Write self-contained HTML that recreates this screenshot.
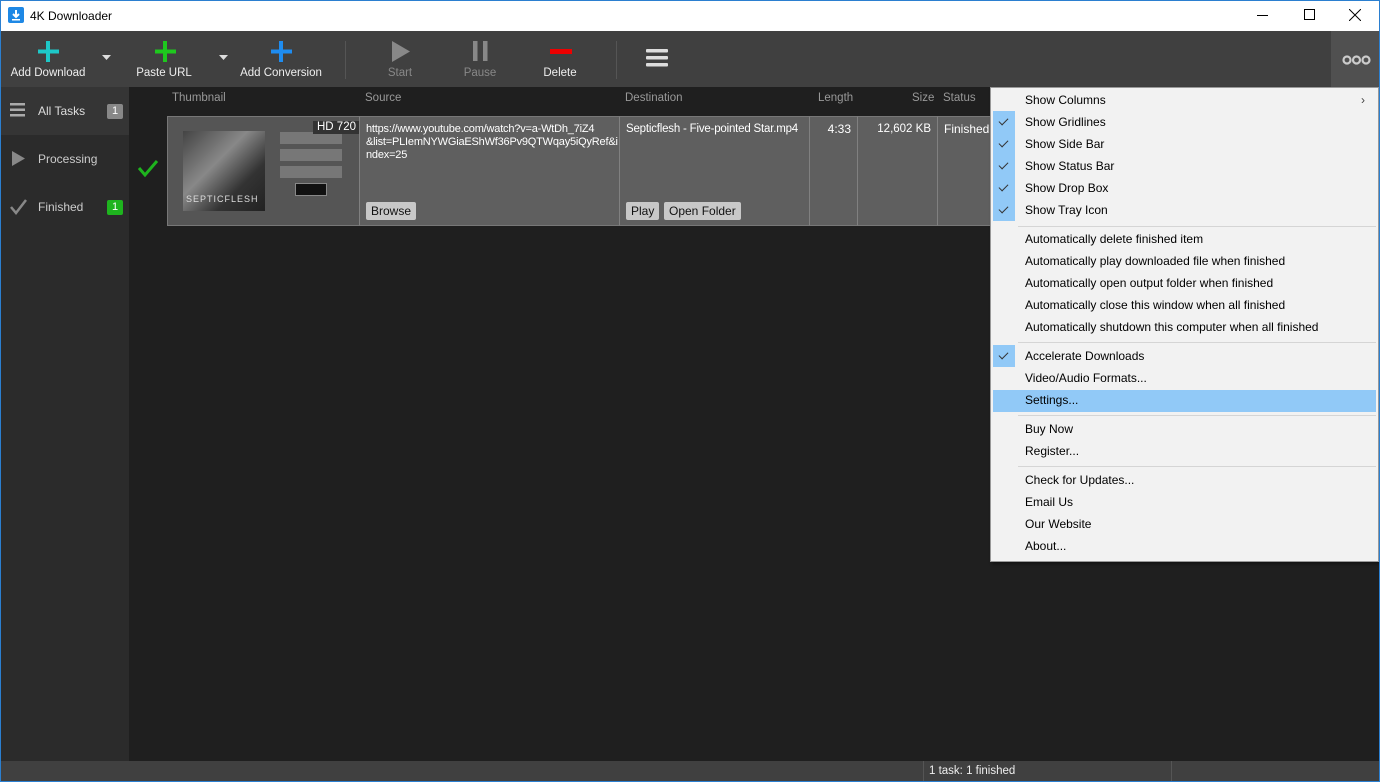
<!DOCTYPE html>
<html><head><style>
*{margin:0;padding:0;box-sizing:border-box}
body{width:1380px;height:782px;overflow:hidden;font-family:"Liberation Sans",sans-serif;font-size:12px;background:#1f1f1f;position:relative}
.a{position:absolute;white-space:nowrap}
#win{position:absolute;left:0;top:0;width:1380px;height:782px;border:1px solid #2b7fd0;pointer-events:none;z-index:10}
.tb{color:#eee;font-size:11.5px;text-align:center}
.mi{position:absolute;left:1025px;color:#000;font-size:12px;line-height:22px;height:22px;white-space:nowrap}
.ck{position:absolute;left:993px;width:22px;height:22px;background:#91c9f7}
.ck:after{content:"";position:absolute;left:8px;top:5px;width:4px;height:8px;border:solid #333;border-width:0 1.5px 1.5px 0;transform:rotate(45deg)}
.sep{position:absolute;left:1018px;width:358px;height:1px;background:#d5d5d5}
.btn{position:absolute;background:#c8c8c8;color:#111;font-size:12px;line-height:18px;padding:0 5px;border-radius:2px;white-space:nowrap}
.hd{position:absolute;top:92px;color:#999;font-size:11.5px}
.cell{position:absolute;top:116px;height:110px;background:#5f5f5f;border-right:1px solid #808080;border-top:1px solid #777;border-bottom:1px solid #777;color:#fff;font-size:12px;padding:6px 6px;line-height:13px;white-space:nowrap;overflow:hidden}
</style></head><body>
<div id="win"></div>
<div class="a" style="left:0;top:0;width:1380px;height:31px;background:#fff"></div>
<div class="a" style="left:8px;top:7px;width:16px;height:16px;background:#1e88e5;border-radius:2px"></div>
<svg class="a" style="left:8px;top:7px" width="16" height="16"><path d="M8 3v7M5 7l3 3 3-3" stroke="#fff" stroke-width="2" fill="none"/><rect x="4" y="12" width="8" height="1.5" fill="#fff"/></svg>
<div class="a" style="left:30px;top:9px;font-size:12px;color:#000">4K Downloader</div>
<div class="a" style="left:1257px;top:15px;width:11px;height:1px;background:#000"></div>
<div class="a" style="left:1304px;top:9px;width:11px;height:11px;border:1px solid #000"></div>
<svg class="a" style="left:1349px;top:9px" width="12" height="12"><path d="M0 0L12 12M12 0L0 12" stroke="#000"/></svg>
<div class="a" style="left:0;top:31px;width:1380px;height:56px;background:#404040"></div>
<div class="a" style="left:1331px;top:31px;width:49px;height:56px;background:#505050"></div>
<svg class="a" style="left:1342px;top:54px" width="30" height="12"><g fill="none" stroke="#ccc" stroke-width="2.2"><circle cx="5" cy="6" r="3.5"/><circle cx="14.5" cy="6" r="3.5"/><circle cx="24" cy="6" r="3.5"/></g></svg>
<svg class="a" style="left:0;top:31px" width="700" height="56">
<path d="M48 10v21M38 20.5h21" stroke="#1ec8c8" stroke-width="4"/>
<path d="M165 10v21M155 20.5h21" stroke="#1ec81e" stroke-width="4"/>
<path d="M281 10v21M271 20.5h21" stroke="#1e8cf0" stroke-width="4"/>
<path d="M102 24h9l-4.5 5z M219 24h9l-4.5 5z" fill="#ddd"/>
<path d="M392 10v21l18-10.5z" fill="#888"/>
<rect x="473" y="10" width="4.5" height="20" fill="#888"/><rect x="483" y="10" width="4.5" height="20" fill="#888"/>
<rect x="550" y="18" width="22" height="5" fill="#e00"/>
<rect x="345" y="10" width="1" height="38" fill="#555"/><rect x="616" y="10" width="1" height="38" fill="#555"/>
<g fill="#ddd"><rect x="646" y="18" width="22" height="3.5" rx="1"/><rect x="646" y="25" width="22" height="3.5" rx="1"/><rect x="646" y="32" width="22" height="3.5" rx="1"/></g>
</svg>
<div class="a tb" style="left:0;top:67px;width:96px">Add Download</div>
<div class="a tb" style="left:124px;top:67px;width:80px">Paste URL</div>
<div class="a tb" style="left:236px;top:67px;width:90px">Add Conversion</div>
<div class="a tb" style="left:380px;top:67px;width:40px;color:#888">Start</div>
<div class="a tb" style="left:460px;top:67px;width:40px;color:#888">Pause</div>
<div class="a tb" style="left:535px;top:67px;width:50px">Delete</div>
<div class="a" style="left:0;top:87px;width:129px;height:674px;background:#2b2b2b"></div>
<div class="a" style="left:0;top:87px;width:129px;height:48px;background:#353535"></div>
<svg class="a" style="left:10px;top:103px" width="16" height="14"><g fill="#aaa"><rect y="0" width="15" height="2.5"/><rect y="5.5" width="15" height="2.5"/><rect y="11" width="15" height="2.5"/></g></svg>
<div class="a" style="left:38px;top:104px;color:#ddd">All Tasks</div>
<div class="a" style="left:107px;top:104px;width:16px;height:15px;background:#888;border-radius:2px;color:#fff;text-align:center;line-height:15px;font-size:11px">1</div>
<svg class="a" style="left:12px;top:151px" width="14" height="16"><path d="M0 0v15l13-7.5z" fill="#888"/></svg>
<div class="a" style="left:38px;top:152px;color:#ccc">Processing</div>
<svg class="a" style="left:10px;top:199px" width="18" height="16"><path d="M1 8l5 6L16 1" stroke="#888" stroke-width="2.5" fill="none"/></svg>
<div class="a" style="left:38px;top:200px;color:#ccc">Finished</div>
<div class="a" style="left:107px;top:200px;width:16px;height:15px;background:#1eb41e;border-radius:2px;color:#fff;text-align:center;line-height:15px;font-size:11px">1</div>
<div class="hd" style="left:172px">Thumbnail</div>
<div class="hd" style="left:365px">Source</div>
<div class="hd" style="left:625px">Destination</div>
<div class="hd" style="left:818px">Length</div>
<div class="hd" style="left:912px">Size</div>
<div class="hd" style="left:943px">Status</div>
<svg class="a" style="left:137px;top:160px" width="22" height="18"><path d="M2 8l6 7L20 1" stroke="#1eb41e" stroke-width="3" fill="none"/></svg>
<div class="cell" style="left:167px;width:193px;background:#555;border-left:1px solid #777;padding:0">
 <div class="a" style="left:15px;top:14px;width:82px;height:80px;background:linear-gradient(135deg,#444,#888 40%,#333 70%,#222)"></div>
 <div class="a" style="left:18px;top:76px;color:#ddd;font-size:9px;letter-spacing:1px">SEPTICFLESH</div>
 <div class="a" style="left:112px;top:15px;width:62px;height:12px;background:#777"></div>
 <div class="a" style="left:112px;top:32px;width:62px;height:12px;background:#777"></div>
 <div class="a" style="left:112px;top:49px;width:62px;height:12px;background:#777"></div>
 <div class="a" style="left:127px;top:66px;width:32px;height:13px;background:#111;border:1px solid #888"></div>
 <div class="a" style="left:145px;top:4px;background:#333;color:#fff;font-size:11.5px;padding:0 4px;line-height:13px">HD 720</div>
</div>
<div class="cell" style="left:360px;width:260px;font-size:11px;letter-spacing:-0.2px">https://www.youtube.com/watch?v=a-WtDh_7iZ4<br>&amp;list=PLIemNYWGiaEShWf36Pv9QTWqay5iQyRef&amp;i<br>ndex=25</div>
<div class="btn" style="left:366px;top:202px">Browse</div>
<div class="cell" style="left:620px;width:190px;font-size:11.5px;letter-spacing:-0.2px">Septicflesh - Five-pointed Star.mp4</div>
<div class="btn" style="left:626px;top:202px">Play</div>
<div class="btn" style="left:664px;top:202px">Open Folder</div>
<div class="cell" style="left:810px;width:48px;text-align:right">4:33</div>
<div class="cell" style="left:858px;width:80px;text-align:right;font-size:11.5px">12,602 KB</div>
<div class="cell" style="left:938px;width:60px">Finished.</div>
<div class="a" style="left:0;top:761px;width:1380px;height:21px;background:#404040"></div>
<div class="a" style="left:923px;top:761px;width:1px;height:21px;background:#555"></div>
<div class="a" style="left:1171px;top:761px;width:1px;height:21px;background:#555"></div>
<div class="a" style="left:929px;top:765px;color:#eee;font-size:11.5px">1 task: 1 finished</div>
<div class="a" style="left:990px;top:87px;width:389px;height:475px;background:#f2f2f2;border:1px solid #999;box-shadow:2px 2px 3px rgba(0,0,0,.4)"></div>
<div class="a" style="left:993px;top:390px;width:383px;height:22px;background:#91c9f7"></div>
<div class="ck" style="top:111px"></div><div class="ck" style="top:133px"></div><div class="ck" style="top:155px"></div><div class="ck" style="top:177px"></div><div class="ck" style="top:199px"></div><div class="ck" style="top:345px"></div>
<div class="sep" style="top:226px"></div><div class="sep" style="top:342px"></div><div class="sep" style="top:415px"></div><div class="sep" style="top:466px"></div>
<div class="mi" style="top:89px">Show Columns</div><div class="a" style="left:1361px;top:93px;color:#444">›</div>
<div class="mi" style="top:111px">Show Gridlines</div>
<div class="mi" style="top:133px">Show Side Bar</div>
<div class="mi" style="top:155px">Show Status Bar</div>
<div class="mi" style="top:177px">Show Drop Box</div>
<div class="mi" style="top:199px">Show Tray Icon</div>
<div class="mi" style="top:228px">Automatically delete finished item</div>
<div class="mi" style="top:250px">Automatically play downloaded file when finished</div>
<div class="mi" style="top:272px">Automatically open output folder when finished</div>
<div class="mi" style="top:294px">Automatically close this window when all finished</div>
<div class="mi" style="top:316px">Automatically shutdown this computer when all finished</div>
<div class="mi" style="top:345px">Accelerate Downloads</div>
<div class="mi" style="top:367px">Video/Audio Formats...</div>
<div class="mi" style="top:389px">Settings...</div>
<div class="mi" style="top:418px">Buy Now</div>
<div class="mi" style="top:440px">Register...</div>
<div class="mi" style="top:469px">Check for Updates...</div>
<div class="mi" style="top:491px">Email Us</div>
<div class="mi" style="top:513px">Our Website</div>
<div class="mi" style="top:535px">About...</div>
</body></html>
